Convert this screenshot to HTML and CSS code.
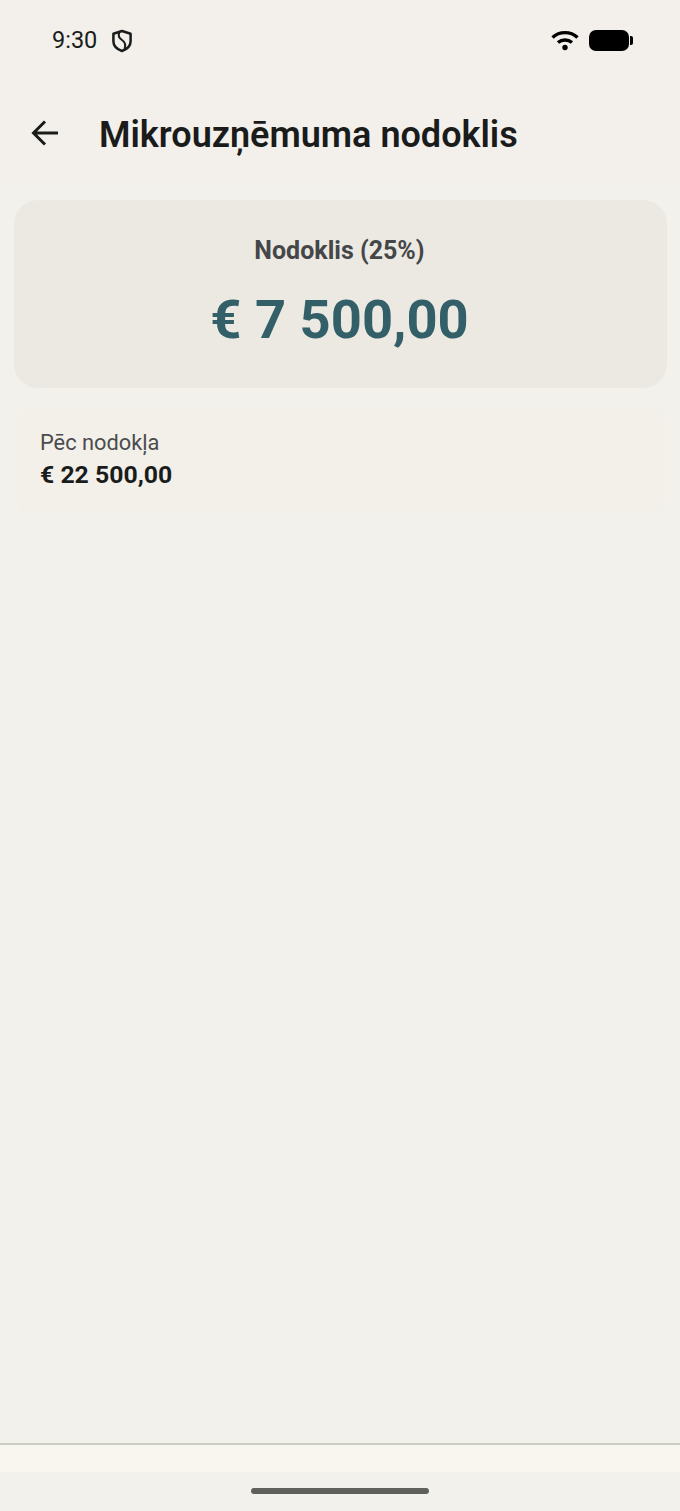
FILE: index.html
```html
<!DOCTYPE html>
<html lang="lv">
<head>
<meta charset="utf-8">
<title>Mikrouzņēmuma nodoklis</title>
<link rel="stylesheet" href="styles.css">
</head>
<body>
<div class="app">
  <header class="top">
    <div class="status">
      <div class="status-left">
        <span class="time">9:30</span>
        <svg class="shield" viewBox="0 0 20 24" width="20" height="24" aria-hidden="true">
          <path d="M10 2 18.600 4.800v7.400c0 4.600-3.600 8-8.600 9.800-5-1.800-8.600-5.200-8.600-9.800V4.800Z" fill="none" stroke="#1a1c1c" stroke-width="2.500" stroke-linejoin="round"/>
          <path d="M7.500 3c-1.500 3-.5 6 2.500 8 3 2 4 5 2.500 9" fill="none" stroke="#1a1c1c" stroke-width="2"/>
        </svg>
      </div>
      <div class="status-right">
        <svg class="wifi" viewBox="0 0 28 22" width="28" height="22" aria-hidden="true">
          <path d="M1.500 8.500C8.500 2 19.500 2 26.500 8.500" fill="none" stroke="#000" stroke-width="3.400"/>
          <path d="M7 13.500c4-3.400 10-3.400 14 0" fill="none" stroke="#000" stroke-width="3.400"/>
          <circle cx="14" cy="18.500" r="2.700" fill="#000"/>
        </svg>
        <div class="battery"><span class="battery-body"></span><span class="battery-cap"></span></div>
      </div>
    </div>
    <div class="appbar">
      <svg class="back" viewBox="0 0 30 28" width="30" height="28" aria-hidden="true">
        <path d="M28 14H4.500M15 2.500 3.500 14 15 25.500" fill="none" stroke="#1a1c1c" stroke-width="3"/>
      </svg>
      <h1 class="title">Mikrouzņēmuma nodoklis</h1>
    </div>
  </header>
  <main class="content">
    <section class="tax-card">
      <div class="tax-label">Nodoklis (25%)</div>
      <div class="tax-value">€ 7 500,00</div>
    </section>
    <section class="after-card">
      <div class="after-label">Pēc nodokļa</div>
      <div class="after-value">€ 22 500,00</div>
    </section>
  </main>
  <footer class="bottom">
    <div class="bottom-band"></div>
    <div class="gesture"><span class="pill"></span></div>
  </footer>
</div>
</body>
</html>
```
FILE: styles.css
```css
* { box-sizing: border-box; }
html, body { margin: 0; padding: 0; }
body {
  width: 680px;
  height: 1511px;
  background: #f2f1ec;
  font-family: Roboto, "Liberation Sans", sans-serif;
  overflow: hidden;
}
.app { display: flex; flex-direction: column; height: 1511px; }
.top { background: #f3f0eb; height: 186px; }
.status {
  height: 80px;
  display: flex;
  justify-content: space-between;
  align-items: center;
  padding: 0 47px 0 52px;
}
.status-left, .status-right { display: flex; align-items: center; }
.status-left { gap: 15px; }
.status-right { gap: 10px; }
.time { font-size: 23.5px; line-height: 28px; color: #1a1c1c; }
.shield { display: block; margin-top: 2px; }
.wifi { display: block; }
.battery { display: flex; align-items: center; gap: 1px; }
.battery-body { display: block; width: 40px; height: 21px; background: #000; border-radius: 7px; }
.battery-cap { display: block; width: 3px; height: 9px; background: #000; border-radius: 0 2px 2px 0; }
.appbar {
  display: flex;
  align-items: center;
  height: 106px;
  padding: 0 0 0 30px;
  gap: 39px;
}
.back { display: block; flex: none; }
.title {
  margin: 4px 0 0;
  font-size: 36px;
  line-height: 44px;
  font-weight: 600;
  color: #1a1c1c;
}
.content {
  flex: 1;
  padding: 14px 13px 0 14px;
  display: flex;
  flex-direction: column;
  gap: 20px;
}
.tax-card {
  height: 188px;
  background: #ece9e3;
  border-radius: 24px;
  display: flex;
  flex-direction: column;
  align-items: center;
  padding: 34px 2px 0 0;
}
.tax-label { font-size: 25px; line-height: 34px; font-weight: 700; color: #444648; }
.tax-value { margin-top: 18px; font-size: 54.3px; line-height: 68px; font-weight: 700; color: #336068; }
.after-card {
  height: 106px;
  margin: 0 3px;
  background: #f3f0ea;
  border-radius: 12px;
  padding: 20px 23px;
  display: flex;
  flex-direction: column;
}
.after-label { font-size: 21.8px; line-height: 30px; color: #4a4c4e; }
.after-value { margin-top: 1px; font-size: 24.8px; line-height: 32px; font-weight: 700; color: #1a1c1c; }
.bottom { height: 68px; border-top: 2px solid #ccccc5; flex: none; }
.bottom-band { height: 27px; background: #f9f6f0; }
.gesture { height: 39px; display: flex; justify-content: center; padding-top: 16px; }
.pill { display: block; width: 178px; height: 6px; background: #5f605c; border-radius: 3px; }
```
